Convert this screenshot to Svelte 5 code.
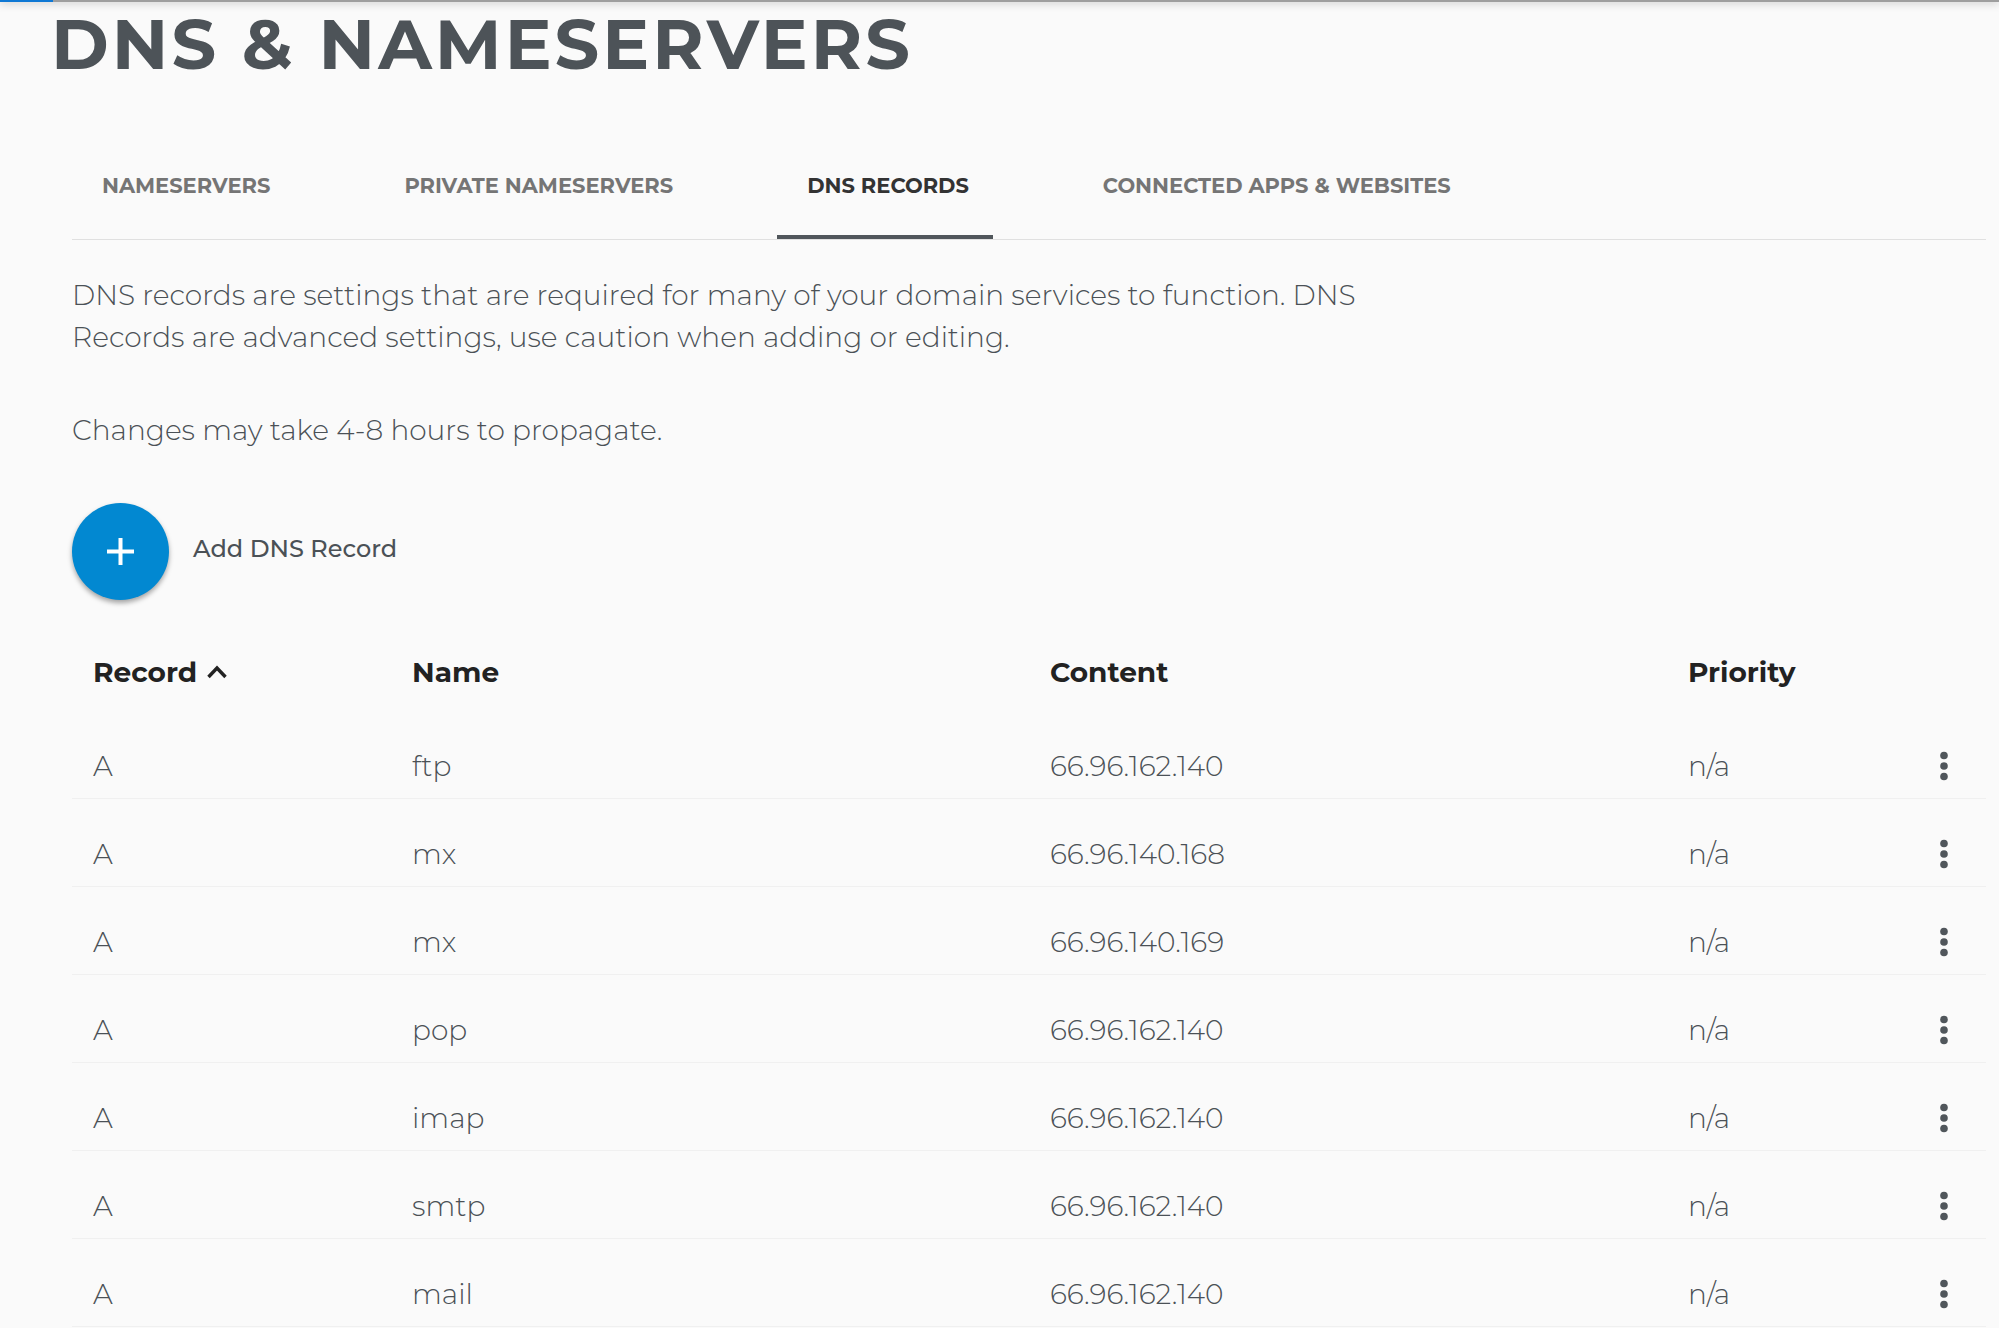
<script>
  const tabs = ['Nameservers', 'Private Nameservers', 'DNS Records', 'Connected Apps & Websites'];
  let active = $state('DNS Records');
  let ascending = $state(true);

  const records = [
    { type: 'A', name: 'ftp', content: '66.96.162.140', priority: 'n/a' },
    { type: 'A', name: 'mx', content: '66.96.140.168', priority: 'n/a' },
    { type: 'A', name: 'mx', content: '66.96.140.169', priority: 'n/a' },
    { type: 'A', name: 'pop', content: '66.96.162.140', priority: 'n/a' },
    { type: 'A', name: 'imap', content: '66.96.162.140', priority: 'n/a' },
    { type: 'A', name: 'smtp', content: '66.96.162.140', priority: 'n/a' },
    { type: 'A', name: 'mail', content: '66.96.162.140', priority: 'n/a' }
  ];
</script>

<div class="topbar"><div class="progress"></div></div>

<main>
  <h1>DNS &amp; NAMESERVERS</h1>

  <div class="panel">
    <nav class="tabs" aria-label="DNS sections">
      {#each tabs as tab}
        <button class="tab" class:active={active === tab} onclick={() => (active = tab)}>{tab}</button>
      {/each}
    </nav>

    <p class="intro">
      DNS records are settings that are required for many of your domain services to function. DNS
      Records are advanced settings, use caution when adding or editing.
    </p>
    <p class="note">Changes may take 4-8 hours to propagate.</p>

    <div class="add">
      <button class="fab" id="add-record" aria-label="Add DNS Record">
        <svg viewBox="0 0 28 28" width="28" height="28" aria-hidden="true">
          <path d="M13.500 0v27M0 13.500h27" fill="none" stroke="#fff" stroke-width="4" />
        </svg>
      </button>
      <label for="add-record">Add DNS Record</label>
    </div>

    <table>
      <colgroup>
        <col class="c-record" />
        <col class="c-wide" />
        <col class="c-wide" />
        <col />
        <col class="c-menu" />
      </colgroup>
      <thead>
        <tr>
          <th scope="col">
            <button class="sort" onclick={() => (ascending = !ascending)}>
              Record
              <svg class:down={!ascending} viewBox="0 0 20 14" width="20" height="14" aria-hidden="true">
                <path d="M1.500 12L10 3l8.500 9" fill="none" stroke="#222" stroke-width="3.400" />
              </svg>
            </button>
          </th>
          <th scope="col">Name</th>
          <th scope="col">Content</th>
          <th scope="col">Priority</th>
          <td></td>
        </tr>
      </thead>
      <tbody>
        {#each records as record}
          <tr>
            <td>{record.type}</td>
            <td>{record.name}</td>
            <td>{record.content}</td>
            <td>{record.priority}</td>
            <td class="menu-cell">
              <button class="menu" aria-label="Options for {record.name}">
                <svg viewBox="0 0 8 30" width="8" height="30" aria-hidden="true">
                  <circle cx="4" cy="4.500" r="3.800" />
                  <circle cx="4" cy="15" r="3.800" />
                  <circle cx="4" cy="25.500" r="3.800" />
                </svg>
              </button>
            </td>
          </tr>
        {/each}
      </tbody>
    </table>
  </div>
</main>

<style>
  :global(body) {
    margin: 0;
    background: #fafafa;
    font-family: Montserrat, Inter, sans-serif;
    color: #4b5156;
  }

  button {
    margin: 0;
    padding: 0;
    border: 0;
    background: none;
    font: inherit;
    color: inherit;
    cursor: pointer;
  }

  .topbar {
    position: absolute;
    top: 0;
    left: 0;
    right: 0;
    height: 2px;
    background: #9e9e9e;
    box-shadow: 0 0 8px rgba(0, 0, 0, 0.5);
  }

  .progress {
    width: 53px;
    height: 2px;
    background: #0f78d4;
  }

  h1 {
    margin: 0 0 44px;
    padding-left: 51px;
    font-size: 70px;
    line-height: 88px;
    font-weight: 700;
    letter-spacing: 3px;
    color: #4d5358;
  }

  .panel {
    margin: 0 13px 0 72px;
  }

  .tabs {
    display: flex;
    gap: 80px;
    border-bottom: 1px solid #e0e0e0;
  }

  .tab {
    height: 107px;
    box-sizing: border-box;
    padding: 4px 24px 0 30px;
    border-bottom: 4px solid transparent;
    font-size: 21px;
    font-weight: 700;
    text-transform: uppercase;
    color: #757575;
  }

  .tab.active {
    color: #333;
    border-bottom-color: #50565b;
  }

  p {
    margin: 0;
    max-width: 1300px;
    font-size: 28px;
    line-height: 42px;
    font-weight: 300;
  }

  .intro {
    margin-top: 34px;
  }

  .note {
    margin-top: 51px;
  }

  .add {
    display: flex;
    align-items: center;
    gap: 24px;
    margin-top: 52px;
  }

  .fab {
    display: flex;
    align-items: center;
    justify-content: center;
    width: 97px;
    height: 97px;
    border-radius: 50%;
    background: #0288d1;
    box-shadow: 0 3px 5px rgba(0, 0, 0, 0.35);
  }

  .add label {
    padding-bottom: 6px;
    font-size: 24px;
    font-weight: 500;
  }

  table {
    width: 100%;
    margin-top: 51px;
    table-layout: fixed;
    border-collapse: separate;
    border-spacing: 0;
    font-size: 28px;
    line-height: 42px;
  }

  .c-record {
    width: 16.67%;
  }

  .c-wide {
    width: 33.33%;
  }

  .c-menu {
    width: 84px;
  }

  th {
    padding: 0 0 18px 21px;
    text-align: left;
    font-weight: 700;
    color: #222;
  }

  .sort {
    display: flex;
    align-items: center;
    gap: 10px;
  }

  .sort .down {
    transform: rotate(180deg);
  }

  tbody td {
    padding: 34px 0 11px 21px;
    border-bottom: 1px solid #f0f0f0;
    font-weight: 300;
  }

  tbody .menu-cell {
    padding-left: 0;
  }

  .menu {
    display: flex;
    align-items: center;
    justify-content: center;
    width: 42px;
    height: 42px;
    margin: 0 auto;
  }

  .menu svg {
    fill: #50565b;
  }
</style>
